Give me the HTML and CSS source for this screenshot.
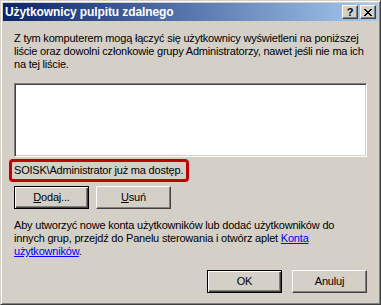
FILE: index.html
```html
<!DOCTYPE html>
<html>
<head>
    <title>Użytkownicy pulpitu zdalnego</title>
    <meta charset="utf-8">
    <link rel="stylesheet" href="styles.css">
</head>
<body>
    <div class="window">
        <div class="titlebar">
            <span class="title">Użytkownicy pulpitu zdalnego</span>
            <div class="title-btns">
                <div class="tbtn help">?</div>
                <div class="tbtn close">
                    <svg width="8" height="7" viewBox="0 0 8 7"><path d="M0 0h2v1h1v1h2v-1h1v-1h2v1h-1v1h-1v1h-1v1h1v1h1v1h1v1h-2v-1h-1v-1h-2v1h-1v1h-2v-1h1v-1h1v-1h1v-1h-1v-1h-1v-1h-1z" fill="#000"/></svg>
                </div>
            </div>
        </div>

        <div class="content">
            <p class="intro">Z tym komputerem mogą łączyć się użytkownicy wyświetleni na poniższej liście oraz dowolni członkowie grupy Administratorzy, nawet jeśli nie ma ich na tej liście.</p>

            <div class="listbox"></div>

            <div class="notice">SOISK\Administrator już ma dostęp.</div>

            <div class="btn-row">
                <div class="btn default"><span><u>D</u>odaj...</span></div>
                <div class="btn"><span><u>U</u>suń</span></div>
            </div>

            <p class="hint">Aby utworzyć nowe konta użytkowników lub dodać użytkowników do innych grup, przejdź do Panelu sterowania i otwórz aplet <a href="#">Konta użytkowników</a>.</p>

            <div class="btn-row bottom">
                <div class="btn default"><span>OK</span></div>
                <div class="btn"><span>Anuluj</span></div>
            </div>
        </div>
    </div>
</body>
</html>
```

FILE: styles.css
```css
html, body { margin: 0; padding: 0; background: #d4d0c8; }
body { font: 11px/13px "Liberation Sans", Arial, sans-serif; letter-spacing: -0.2px; color: #000; }
p { margin: 0; }

.window { width: 381px; height: 305px; box-sizing: border-box; background: #d4d0c8; border: 1px solid; border-color: #d4d0c8 #404040 #404040 #d4d0c8; box-shadow: inset 1px 1px #fff, inset -1px -1px #808080; padding: 2px; display: flex; flex-direction: column; }

.titlebar { height: 18px; display: flex; align-items: center; justify-content: space-between; background: linear-gradient(to right, #0a246a, #a6caf0); padding: 0 2px 0 2px; }
.title { color: #fff; font: bold 12px/18px "Liberation Sans", Arial, sans-serif; letter-spacing: -0.1px; }
.title-btns { display: flex; gap: 2px; }
.tbtn { width: 16px; height: 14px; box-sizing: border-box; background: #d4d0c8; border: 1px solid; border-color: #fff #404040 #404040 #fff; box-shadow: inset -1px -1px #808080; display: flex; align-items: center; justify-content: center; }
.tbtn.help { font: bold 11px/12px "Liberation Sans", Arial, sans-serif; }

.content { padding: 11px 11px 0 11px; }
.intro { height: 39px; }

.listbox { margin-top: 12px; height: 74px; box-sizing: border-box; background: #fff; border: 1px solid; border-color: #808080 #fff #fff #808080; box-shadow: inset 1px 1px #404040, inset -1px -1px #d4d0c8; }

.notice { margin: 2px 0 0 -5px; width: 180px; height: 23px; box-sizing: border-box; border: 3px solid #c00000; border-radius: 4px; padding-left: 2px; line-height: 17px; white-space: nowrap; }

.btn-row { display: flex; gap: 7px; margin-top: 4px; }
.btn { width: 75px; height: 23px; box-sizing: border-box; background: #d4d0c8; border: 1px solid; border-color: #fff #404040 #404040 #fff; box-shadow: inset -1px -1px #808080; display: flex; align-items: center; justify-content: center; }
.btn.default { border: 1px solid #000; box-shadow: inset 1px 1px #fff, inset -1px -1px #404040, inset -2px -2px #808080; }

.hint { margin-top: 10px; height: 39px; }
.hint a { color: #0000ff; text-decoration: underline; }

.btn-row.bottom { justify-content: flex-end; gap: 10px; margin-top: 12px; }
```
